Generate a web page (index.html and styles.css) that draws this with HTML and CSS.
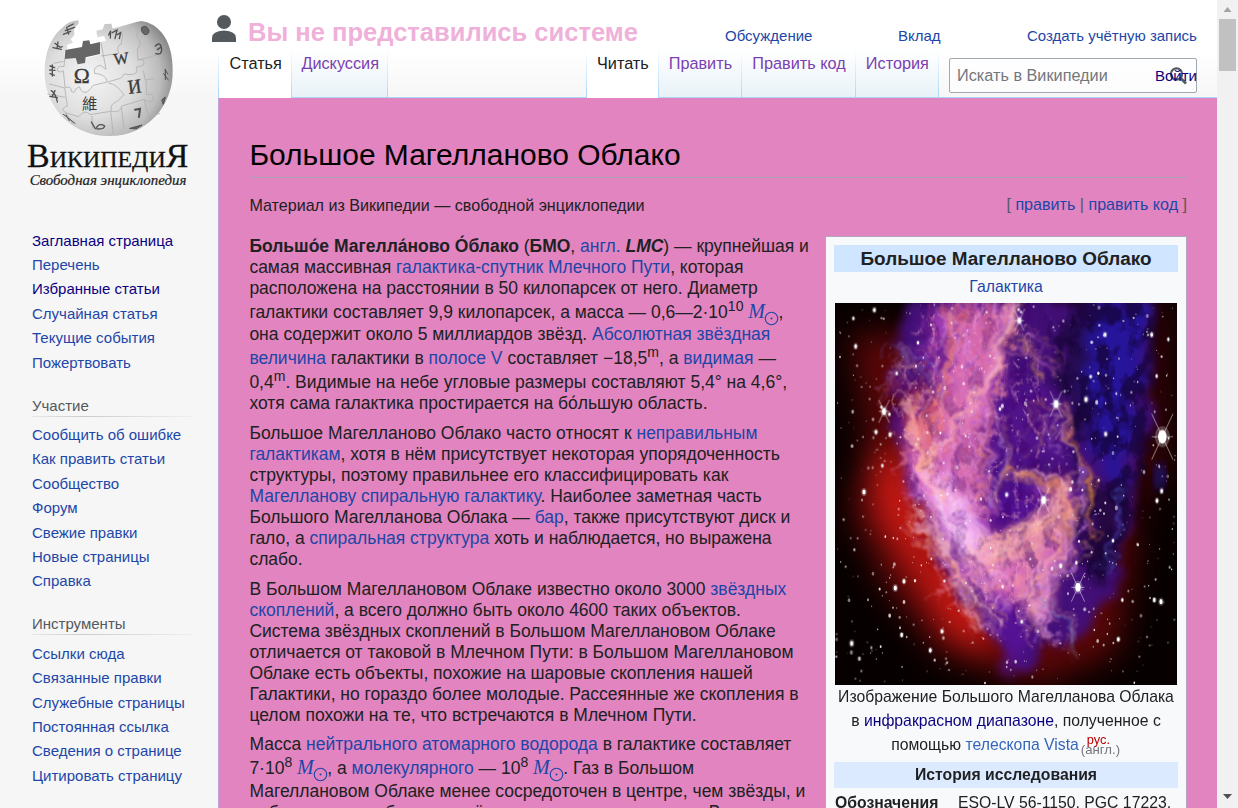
FILE: index.html
```html
<!DOCTYPE html>
<html lang="ru">
<head>
<meta charset="utf-8">
<title>Большое Магелланово Облако — Википедия</title>
<link rel="stylesheet" href="styles.css">
</head>
<body>
<div class="page">
  <aside class="sidebar">
    <svg class="logo" viewBox="0 0 660 600">
      <defs>
        <radialGradient id="ball" cx="0.36" cy="0.5" r="0.68">
          <stop offset="0" stop-color="#f4f4f4"/><stop offset="0.5" stop-color="#dedede"/>
          <stop offset="0.8" stop-color="#bcbcbc"/><stop offset="1" stop-color="#858585"/>
        </radialGradient>
      </defs>
      <path fill="url(#ball)" d="M190 80Q205 64 235 61L236 70L222 86L223 106L212 118L220 128L202 134L201 147L194 152L194 176L228 172L232 191L254 190L257 176L300 164V126L318 122L312 108L292 112L289 92L308 88L314 72L334 71L338 86L412 65L424 63Q460 68 484 97C508 126 518 165 518 212C520 318 440 407 330 408C214 410 133 318 134 215C134 152 155 108 190 80Z"/>
      <path fill="#666" d="M196 150L246 141L249 123L268 121L271 133L300 126V162L257 172L255 189L233 193L227 174L194 177Z"/>
      <g fill="none" stroke="#b0b0b0" stroke-width="2.500" stroke-linejoin="round">
        <path d="M194 176L192 200Q170 195 172 213Q184 220 190 212L195 262Q216 258 214 274Q226 282 226 268L238 260Q245 282 262 276Q274 264 280 256L322 246Q318 222 284 220Q278 200 302 196L318 208L303 128"/>
        <path d="M303 168L356 160Q348 138 364 132L368 102L340 86M405 68Q418 90 410 110Q430 128 412 148L414 180Q438 172 430 196L408 202Q420 222 390 224L372 222L364 234L324 246"/>
        <path d="M414 180Q452 172 484 160M430 212L436 240L462 236M438 240L440 284Q462 278 460 300Q444 310 432 298L366 318Q360 340 334 334Q328 312 352 304L372 284Q348 250 326 250"/>
        <path d="M148 252L194 264L202 318Q180 324 196 338L236 350Q256 326 270 344L332 334L340 404M196 338L220 372M276 348L278 386M364 320L372 386M432 298L446 350L480 340M160 190L190 184M142 282L196 292"/>
      </g>
      <g fill="#3a3a3a" font-family="Liberation Serif, serif" font-size="58">
        <text x="221" y="248" font-size="62" textLength="48" lengthAdjust="spacingAndGlyphs" stroke="#3a3a3a">Ω</text>
        <text x="0" y="0" transform="translate(343 194) rotate(-7)" font-size="48" stroke="#3a3a3a">W</text>
        <text x="0" y="0" transform="translate(386 282) rotate(-7)" font-size="60" textLength="40" lengthAdjust="spacingAndGlyphs" stroke="#3a3a3a">И</text>
        <text x="246" y="328" font-family="Noto Sans CJK TC, sans-serif" font-size="46">維</text>
      </g>
      <g fill="none" stroke="#505050" stroke-width="4" stroke-linecap="round">
        <path stroke-width="6" d="M405 329L420 326L417 351"/>
        <path d="M466 138Q482 122 485 148Q486 166 467 161M472 149L482 142"/>
        <path d="M274 366L286 386Q312 390 314 378Q298 368 290 382M326 105L332 92L331 114M337 98L351 90L345 116M352 104L362 98L358 116"/>
        <path d="M204 80L220 72M196 92L224 82M190 103L212 94M200 82L206 102M165 130L180 142L187 140M159 143L184 148M174 126L171 146M150 198L164 203M149 210L165 211M150 221L163 226M157 195V228M154 272Q168 282 172 306M165 272L157 288M150 289L172 293"/>
        <path fill="#666" stroke-width="3" d="M426 82Q438 72 447 91Q448 104 434 104Q420 95 426 82ZM486 299L496 291L490 312ZM390 385L426 375L410 386Z"/>
        <path stroke-width="3" d="M190 343L225 370M198 345L208 362M495 208L503 222M491 221L505 240M496 209V239"/>
      </g>
      <text class="wordmark" x="81" y="502" textLength="484" lengthAdjust="spacingAndGlyphs">ВикипедиЯ</text>
      <text class="motto" x="89" y="555" textLength="470" lengthAdjust="spacingAndGlyphs">Свободная энциклопедия</text>
    </svg>
    <ul class="menu main-menu">
      <li><a class="seen">Заглавная страница</a></li><li><a>Перечень</a></li><li><a class="seen">Избранные статьи</a></li><li><a>Случайная статья</a></li><li><a>Текущие события</a></li><li><a>Пожертвовать</a></li>
    </ul>
    <h3>Участие</h3>
    <ul class="menu">
      <li><a>Сообщить об ошибке</a></li><li><a>Как править статьи</a></li><li><a>Сообщество</a></li><li><a>Форум</a></li><li><a>Свежие правки</a></li><li><a>Новые страницы</a></li><li><a>Справка</a></li>
    </ul>
    <h3>Инструменты</h3>
    <ul class="menu">
      <li><a>Ссылки сюда</a></li><li><a>Связанные правки</a></li><li><a>Служебные страницы</a></li><li><a>Постоянная ссылка</a></li><li><a>Сведения о странице</a></li><li><a>Цитировать страницу</a></li>
    </ul>
  </aside>
  <div class="column">
    <header>
      <div class="personal">
        <svg class="user" viewBox="0 0 24 27"><circle cx="12" cy="7" r="7" fill="#54595d"/><path d="M0 27V23Q0 16 12 15.5Q24 16 24 23V27Z" fill="#54595d"/></svg>
        <strong>Вы не представились системе</strong>
        <a class="talk">Обсуждение</a><a class="contrib">Вклад</a><a class="create">Создать учётную запись</a>
      </div>
      <nav>
        <span class="tab active first">Статья</span><span class="tab">Дискуссия</span>
        <span class="tab active read">Читать</span><span class="tab view">Править</span><span class="tab view">Править код</span><span class="tab view">История</span>
        <div class="search">Искать в Википедии
          <svg class="lens" viewBox="0 0 18 20"><circle cx="7.5" cy="8" r="5.6" fill="none" stroke="#54595d" stroke-width="2.2"/><path d="M11.5 12L17 17.5" stroke="#54595d" stroke-width="2.7"/></svg>
          <a class="login">Войти</a>
        </div>
      </nav>
    </header>
    <main>
      <h1>Большое Магелланово Облако</h1>
      <div class="subrow"><span class="from">Материал из Википедии — свободной энциклопедии</span><span class="edit">[ <a>править</a> | <a>править код</a> ]</span></div>
      <div class="body">
        <article>
          <p><span class="line"><b>Большо́е Магелла́ново О́блако</b> (<b>БМО</b>, <a>англ.</a> <b><i>LMC</i></b>) — крупнейшая и</span>
          <span class="line">самая массивная <a>галактика-спутник</a> <a>Млечного Пути</a>, которая</span>
          <span class="line">расположена на расстоянии в 50 килопарсек от него. Диаметр</span>
          <span class="line up3">галактики составляет 9,9 килопарсек, а масса — 0,6—2·10<sup>10</sup> <a class="sun">M<svg viewBox="0 0 12 12"><circle cx="6" cy="6" r="5"/><circle class="dot" cx="6" cy="6" r=".8"/></svg></a>,</span>
          <span class="line up1">она содержит около 5 миллиардов звёзд. <a>Абсолютная звёздная</a></span>
          <span class="line up3"><a>величина</a> галактики в <a>полосе V</a> составляет −18,5<sup>m</sup>, а <a>видимая</a> —</span>
          <span class="line up3">0,4<sup>m</sup>. Видимые на небе угловые размеры составляют 5,4° на 4,6°,</span>
          <span class="line">хотя сама галактика простирается на бо́льшую область.</span></p>
          <p><span class="line">Большое Магелланово Облако часто относят к <a>неправильным</a></span>
          <span class="line"><a>галактикам</a>, хотя в нём присутствует некоторая упорядоченность</span>
          <span class="line">структуры, поэтому правильнее его классифицировать как</span>
          <span class="line"><a>Магелланову спиральную галактику</a>. Наиболее заметная часть</span>
          <span class="line">Большого Магелланова Облака — <a>бар</a>, также присутствуют диск и</span>
          <span class="line">гало, а <a>спиральная структура</a> хоть и наблюдается, но выражена</span>
          <span class="line">слабо.</span></p>
          <p><span class="line">В Большом Магеллановом Облаке известно около 3000 <a>звёздных</a></span>
          <span class="line"><a>скоплений</a>, а всего должно быть около 4600 таких объектов.</span>
          <span class="line">Система звёздных скоплений в Большом Магеллановом Облаке</span>
          <span class="line">отличается от таковой в Млечном Пути: в Большом Магеллановом</span>
          <span class="line">Облаке есть объекты, похожие на шаровые скопления нашей</span>
          <span class="line">Галактики, но гораздо более молодые. Рассеянные же скопления в</span>
          <span class="line">целом похожи на те, что встречаются в Млечном Пути.</span></p>
          <p class="last"><span class="line">Масса <a>нейтрального атомарного водорода</a> в галактике составляет</span>
          <span class="line up3">7·10<sup>8</sup> <a class="sun">M<svg viewBox="0 0 12 12"><circle cx="6" cy="6" r="5"/><circle class="dot" cx="6" cy="6" r=".8"/></svg></a>, а <a>молекулярного</a> — 10<sup>8</sup> <a class="sun">M<svg viewBox="0 0 12 12"><circle cx="6" cy="6" r="5"/><circle class="dot" cx="6" cy="6" r=".8"/></svg></a>. Газ в Большом</span>
          <span class="line up2">Магеллановом Облаке менее сосредоточен в центре, чем звёзды, и</span>
          <span class="line">наблюдается на большом её протяжении около центра. В</span></p>
        </article>
        <section class="infobox">
          <div class="box-title">Большое Магелланово Облако</div>
          <div class="kind"><a>Галактика</a></div>
          <svg class="nebula" viewBox="15 9 1026 1146" preserveAspectRatio="none">
            <defs>
              <filter id="b60" x="-50%" y="-50%" width="200%" height="200%" color-interpolation-filters="sRGB"><feGaussianBlur stdDeviation="50"/></filter>
              <filter id="b20" x="-50%" y="-50%" width="200%" height="200%" color-interpolation-filters="sRGB"><feTurbulence type="fractalNoise" baseFrequency=".012" numOctaves="5" seed="4" result="n"/><feDisplacementMap in="SourceGraphic" in2="n" scale="110" xChannelSelector="R" yChannelSelector="G"/><feGaussianBlur stdDeviation="14"/></filter>
              <filter id="cloud" x="-30%" y="-30%" width="160%" height="160%" color-interpolation-filters="sRGB"><feTurbulence type="fractalNoise" baseFrequency=".015" numOctaves="5" seed="8" result="n"/><feDisplacementMap in="SourceGraphic" in2="n" scale="120" xChannelSelector="R" yChannelSelector="G"/><feGaussianBlur stdDeviation="18"/></filter>
              <filter id="wisp" x="-30%" y="-30%" width="160%" height="160%" color-interpolation-filters="sRGB"><feTurbulence type="fractalNoise" baseFrequency=".018" numOctaves="4" seed="12" result="n"/><feDisplacementMap in="SourceGraphic" in2="n" scale="80" xChannelSelector="R" yChannelSelector="G"/><feGaussianBlur stdDeviation="2.4"/></filter>
              <filter id="veins" x="0" y="0" width="100%" height="100%" color-interpolation-filters="sRGB"><feTurbulence type="turbulence" baseFrequency=".016 .010" numOctaves="4" seed="21"/><feColorMatrix values="0 0 0 0 1  0 0 0 0 .72  0 0 0 0 .78  -5 0 0 0 1"/></filter>
              <filter id="dark" x="0" y="0" width="100%" height="100%" color-interpolation-filters="sRGB"><feTurbulence type="fractalNoise" baseFrequency=".022 .014" numOctaves="5" seed="31"/><feColorMatrix values="0 0 0 0 .25  0 0 0 0 0  0 0 0 0 .42  6 0 0 0 -2.700"/></filter>
              <filter id="night" x="0" y="0" width="100%" height="100%" color-interpolation-filters="sRGB"><feTurbulence type="fractalNoise" baseFrequency=".020 .013" numOctaves="4" seed="5"/><feColorMatrix values="0 0 0 0 .08  0 0 0 0 .01  0 0 0 0 .20  5 0 0 0 -2.100"/></filter>
              <filter id="soft"><feGaussianBlur stdDeviation="12"/></filter>
              <mask id="body"><path filter="url(#soft)" fill="#fff" d="M290 0L600 0L640 240L700 400L730 600L690 770L620 920L560 960L450 940L350 830L310 690L240 580L190 420L160 250L240 130Z"/></mask>
              <mask id="side"><path filter="url(#soft)" fill="#fff" d="M640 0H980L960 500L850 850L730 830L740 500Z"/></mask>
            </defs>
            <rect x="15" y="9" width="1026" height="1146" fill="#070001"/>
            <g filter="url(#b60)">
              <path fill="#5c0708" d="M60 100L120 450L60 620L160 850L330 1060L620 1160L860 1060L920 700L700 400L300 100Z"/>
              <path fill="#d01a14" d="M130 440L230 480L310 740L490 960L490 1060L360 1010L270 850L140 640Z"/>
              <path fill="#320307" d="M860 0L1020 0L1030 500L880 700Z"/>
            </g>
            <path filter="url(#b20)" fill="#430f78" d="M210 0L960 0L970 250L930 480L900 660L860 840L800 940L770 1010L690 1060L640 1030L600 1130L570 1120L520 1020L470 980L390 890L350 790L290 660L250 520L200 350L190 210Z"/>
            <g filter="url(#cloud)">
              <path fill="#240b4c" d="M690 40L810 60L800 330L760 460L690 260Z"/>
              <path fill="#26149a" d="M790 0L950 0L940 200L880 560L790 460L760 160Z"/>
              <path fill="#24083f" d="M780 580L890 560L840 850L770 800Z"/>
              <path fill="#9b3bb2" d="M290 0L560 0L510 250L520 480L470 600L680 560L740 560L720 780L640 950L480 940L370 800L270 620L210 420L290 250Z"/>
              <path fill="#d267b4" d="M370 30L540 20L500 220L430 390L420 570L460 720L600 700L700 620L690 770L620 900L450 860L350 720L280 590L240 460L370 270Z"/>
              <path fill="#50138a" d="M520 230L690 290L690 480L560 510L470 570L470 410Z"/>
              <path fill="#501092" d="M510 560L640 570L600 680L460 690Z"/>
              <path fill="#551294" d="M500 900L590 920L590 1110L550 1130L500 1010Z"/>
              <path fill="#9a2141" d="M180 220L280 230L340 350L290 400L230 380Z" opacity=".6"/>
              <path fill="#ed7070" d="M240 350L380 270L330 450L240 440Z" opacity=".65"/>
              <path fill="#f4b8f6" d="M290 540L370 530L450 700L440 800L360 700Z"/>
              <path fill="#f0a5a5" d="M450 710L560 710L690 590L690 680L610 790L410 790Z" opacity=".7"/>
              <path fill="#c6656e" d="M650 520L710 520L720 690L670 740Z" opacity=".7"/>
              <path fill="#d978a5" d="M560 830L670 800L670 900L600 960Z" opacity=".8"/>
            </g>
            <g mask="url(#side)"><rect x="15" y="9" width="1026" height="1146" filter="url(#night)" opacity=".7"/></g>
            <g mask="url(#body)"><rect x="15" y="9" width="1026" height="1146" filter="url(#dark)" opacity=".45"/><rect x="15" y="9" width="1026" height="1146" filter="url(#veins)" opacity=".5"/></g>
            <g id="filaments" filter="url(#wisp)" fill="none" stroke-linecap="round"></g>
            <g id="stars" fill="#fff"></g>
            <g fill="#1c1496" filter="url(#soft)"><ellipse cx="990" cy="530" rx="20" ry="42" opacity=".6"/></g>
            <g id="flares" fill="#fff" stroke="#fff"></g>
          </svg>
          <div class="caption">Изображение Большого Магелланова Облака<br>в <a class="seen">инфракрасном диапазоне</a>, полученное с<br>помощью <a class="ext">телескопа Vista</a><span class="langs"><i class="ru">рус.</i><i class="en">(англ.)</i></span></div>
          <div class="box-head">История исследования</div>
          <div class="fact"><b>Обозначения</b><span>ESO-LV 56-1150, PGC 17223,</span></div>
        </section>
      </div>
    </main>
  </div>
  <div class="scrollbar"><svg viewBox="0 0 21 808"><rect x="2" y="19" width="17" height="52" fill="#c1c1c1"/><path d="M6.500 12L10.500 7L14.500 12Z" fill="#a3a3a3"/><path d="M6 794H15L10.500 799Z" fill="#505050"/></svg></div>
</div>
<script src="nebula.js"></script>
</body>
</html>
```
FILE: styles.css
```css
* { box-sizing: border-box; }
body { margin: 0; background: #f6f6f6; color: #202122; font-family: "Liberation Sans", Arial, sans-serif; overflow: hidden; }
a { color: #1d46a8; text-decoration: none; }
a.seen { color: #0b0080; }
.page { display: grid; grid-template-columns: 218px 999px 21px; height: 808px; overflow: hidden; }
.sidebar { background: linear-gradient(#fff 50px, #f6f6f6 100px); font-size: 15px; white-space: nowrap; }
.logo { display: block; width: 220px; height: 200px; }
.wordmark { font: 98px "Liberation Serif", serif; font-variant: small-caps; fill: #111; stroke: #111; stroke-width: .8; }
.motto { font: italic 41px "Liberation Serif", serif; fill: #222; stroke: #222; stroke-width: .6; }
.menu { list-style: none; margin: 0; padding: 0 0 0 32px; }
.menu li { height: 24.400px; line-height: 24.400px; }
.main-menu { padding-top: 28.700px; }
.sidebar h3 { margin: 17.700px 26px 6.300px 32px; height: 24px; font-weight: 400; font-size: 15px; line-height: 25px; color: #54595d; border-bottom: 1px solid; border-image: linear-gradient(to right, #e8e8e8, #c8ccd1 33%, #f0f0f0) 1; }
.column { height: 808px; display: flex; flex-direction: column; white-space: nowrap; }
header { height: 98px; flex: none; background: linear-gradient(#fff 50px, #f6f6f6 98px); border-bottom: 1px solid #a7d7f9; }
.personal { height: 50px; display: flex; align-items: flex-start; font-size: 15px; position: relative; margin-left: -6px; }
.user { width: 24px; height: 27px; margin-top: 15px; }
.personal strong { font-size: 25.540px; line-height: 30px; color: #efb0d9; margin: 17px 0 0 12px; width: 477px; }
.personal a { line-height: 18px; margin-top: 27px; }
.talk { width: 173px; } .contrib { width: 129px; }
nav { display: flex; height: 47px; }
.tab { font-size: 16.250px; height: 47px; line-height: 20px; padding: 3px 8px 0 9px; color: #7b3fb0; border-right: 1px solid; border-image: linear-gradient(#fff, #a7d7f9) 1; background: linear-gradient(#fff, #e8f2f8); }
.tab.active { color: #202122; background: #fff; height: 48px; }
.tab.first { border-left: 1px solid; padding-left: 10.500px; padding-right: 9.500px; }
.tab.read { margin-left: 198px; border-left: 1px solid; padding-left: 10px; padding-right: 9px; }
.tab.view { padding-left: 10px; padding-right: 9.200px; }
.search { position: relative; margin: 8px 20px 0 auto; width: 248px; height: 35px; border: 1px solid #a2a9b1; border-radius: 2px; background: rgba(255,255,255,.6); font-size: 16.250px; line-height: 33px; padding-left: 7px; color: #72777d; }
.lens { position: absolute; right: 9px; top: 7px; width: 18px; height: 20px; }
.login { position: absolute; right: -1px; top: 0; font-size: 15px; color: #0b0080; }
main { flex: 1; min-height: 0; overflow: hidden; background: #e184bf; border-left: 1px solid #bda6de; padding: 33px 30px 0 30.400px; }
h1 { margin: 0; height: 47px; border-bottom: 1px solid #a9a3b0; color: #000; font-weight: 400; font-size: 29.970px; line-height: 48px; }
.subrow { display: flex; justify-content: space-between; height: 58px; padding-top: 16px; line-height: 22px; font-size: 16.100px; }
.edit { color: #54595d; line-height: 20px; }
.body { display: flex; justify-content: space-between; }
article { width: 570px; font-size: 17.500px; }
p { margin: 0 0 9px; }
p.last { margin-top: -1px; }
.line { display: block; line-height: 21px; height: 21px; }
.up1 { height: 22px; padding-top: 1px; } .up2 { height: 23px; padding-top: 2px; } .up3 { height: 24px; padding-top: 3px; }
sup { font-size: 14px; line-height: 0; vertical-align: 7px; }
.sun { font-family: "Liberation Serif", serif; font-style: italic; font-size: 20px; line-height: 0; }
.sun svg { width: 15px; height: 15px; vertical-align: -8px; margin-left: -1px; margin-right: -.5px; fill: none; stroke: currentColor; stroke-width: .9; }
.sun .dot { fill: currentColor; stroke: none; }
.infobox { width: 362px; height: 650px; flex: none; background: #f8f9fa; border: 1px solid #b3a5bf; padding: 7px 8px; font-size: 15.750px; }
.box-title { height: 27px; margin-top: 1px; background: #d0e5ff; text-align: center; font-weight: 700; font-size: 18.900px; line-height: 27px; }
.kind { height: 31px; line-height: 29px; text-align: center; }
.nebula { display: block; width: 342px; height: 382px; margin-left: 1px; }
.caption { height: 77px; line-height: 24px; text-align: center; }
.ext { color: #36b; }
.langs { display: inline-block; position: relative; width: 42px; height: 12px; font-size: 12.800px; line-height: 12px; text-align: left; }
.langs i { font-style: normal; position: absolute; }
.ru { left: 8px; top: -4px; color: #ba0000; } .en { left: 2px; top: 6px; font-size: 13.200px; color: #72777d; }
.box-head { height: 26px; background: #dceaff; text-align: center; line-height: 26px; font-weight: 700; }
.fact { display: flex; line-height: 24px; padding: 3px 0 0 1px; }
.fact b { width: 123px; }
.scrollbar { background: #f1f1f1; }
.scrollbar svg { display: block; width: 21px; height: 808px; }
```
FILE: nebula.js
```js
let seed = 77;
const rnd = () => (seed = (seed * 16807) % 2147483647) / 2147483647;
const draw = (id, markup) => { document.getElementById(id).innerHTML = markup; };

// Bundles of gas filaments: control points, strand count, spread, colours.
const bundles = [
  [[[360,0],[370,150],[330,320],[260,470]], 26, 110, ['#f08a7a','#ff9a55','#f5b0d8','#d03a70']],
  [[[550,0],[520,220],[440,300],[280,490]], 26, 50, ['#ffc9b0','#ffb7d9','#f98d65','#ffd5f5']],
  [[[520,0],[500,200],[410,350],[460,600]], 34, 120, ['#f0a0dc','#ee7f82','#d678e0','#ff9c70']],
  [[[420,0],[430,200],[350,400],[370,600]], 40, 170, ['#f0a0dc','#dd5f82','#d678e0']],
  [[[250,300],[230,450],[280,560],[360,620]], 24, 60, ['#ffb06b','#ffc1c9','#f08bd0']],
  [[[290,540],[350,580],[390,710],[490,820]], 44, 130, ['#f6d0ff','#ffc6e4','#e493f5']],
  [[[260,640],[320,700],[370,820],[490,980]], 34, 110, ['#ee9070','#c783eb','#ffc9d0']],
  [[[430,790],[520,700],[650,710],[710,560]], 40, 130, ['#ffb78a','#ffcfd4','#ee84aa']],
  [[[530,530],[620,530],[760,510],[700,750]], 24, 70, ['#ff9a73','#f7b7d0','#d8834b']],
  [[[700,320],[700,430],[800,450],[770,700]], 12, 45, ['#f1b23e','#dc7b52','#b777d0']],
  [[[510,350],[550,460],[540,530],[480,620]], 9, 50, ['#dc9c59','#a77fe0']],
  [[[710,720],[710,870],[570,800],[620,980]], 44, 140, ['#ffb076','#f6a8e4','#cf8ae8']],
  [[[510,100],[580,150],[620,80],[640,210]], 14, 110, ['#c98a60','#b966b8']],
  [[[180,250],[200,100],[270,180],[320,270]], 18, 130, ['#6f6cd8','#a06898','#b75a52']],
  [[[880,560],[840,620],[870,720],[810,820]], 8, 40, ['#4258d0','#5a4dba']],
  [[[650,880],[690,970],[760,930],[720,1050]], 12, 70, ['#7aa2e0','#b9698a']],
  [[[340,850],[440,780],[480,870],[570,850]], 26, 110, ['#ff9fa0','#e58ce4']],
  [[[620,340],[660,300],[700,380],[640,420]], 14, 120, ['#c07a60','#9a69c0']]
];
draw('filaments', bundles.map(([pts, count, spread, tints]) => {
  let out = '';
  for (let i = 0; i < count; i++) {
    const q = pts.map(([x, y]) => `${(x + (rnd() - .5) * spread).toFixed(0)} ${(y + (rnd() - .5) * spread).toFixed(0)}`);
    out += `<path d="M${q[0]}C${q[1]} ${q[2]} ${q[3]}" stroke="${tints[i % tints.length]}" stroke-width="${(1.5 + rnd() * rnd() * 7).toFixed(1)}" opacity="${(.2 + rnd() * .45).toFixed(2)}"/>`;
  }
  return out;
}).join(''));

let stars = '';
for (let i = 0; i < 650; i++) {
  const r = 1 + rnd() * rnd() * 4;
  stars += `<ellipse cx="${(18 + rnd() * 1020).toFixed(0)}" cy="${(12 + rnd() * 1140).toFixed(0)}" rx="${r.toFixed(1)}" ry="${(r * 1.5).toFixed(1)}" opacity="${(.4 + rnd() * .5).toFixed(2)}"/>`;
}
draw('stars', stars);

const bright = [[997,410,16],[744,862,10],[678,312,9],[162,334,8],[568,62,7],[641,600,9],[102,576,6],[196,864,6],[336,994,5],[65,1030,6],[827,402,5],[768,298,6],[825,104,5],[993,905,6],[973,900,5],[865,1018,5],[301,1051,5],[180,404,5],[200,220,4],[264,128,4],[510,327,4],[530,584,5],[995,573,5],[981,602,5],[215,1005,5],[133,30,5],[77,139,5],[70,55,4],[157,497,4],[222,844,5],[980,228,4],[965,104,5],[1015,118,4],[782,230,4],[877,900,4],[138,396,5],[692,798,5],[575,965,4],[739,788,4],[849,722,4]];
draw('flares', bright.map(([x, y, r]) => {
  const ray = r > 6 ? `<path d="M${x - r * 2} ${y - r * 4.3}L${x + r * 2} ${y + r * 4.3}M${x + r * 2} ${y - r * 4.3}L${x - r * 2} ${y + r * 4.3}M${x - r * 2} ${y}H${x + r * 2}" stroke-width="2.5" opacity=".6"/>` : '';
  return `${ray}<ellipse cx="${x}" cy="${y}" rx="${r * 1.4}" ry="${r * 2}" opacity=".25" stroke="none"/><ellipse cx="${x}" cy="${y}" rx="${r * .8}" ry="${r * 1.3}" stroke="none"/>`;
}).join(''));
```
